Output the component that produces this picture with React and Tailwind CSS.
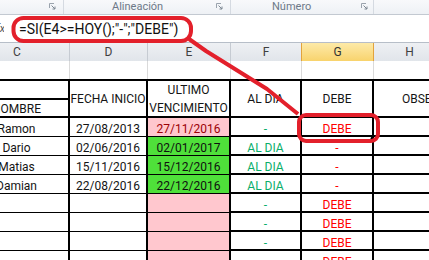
const COLS = "grid grid-cols-[105px_78px_83px_71px_72px_72px] -ml-[35px] w-[481px]";

const rows = [
  { name: "Ramon", start: "27/08/2013", last: "27/11/2016", ok: false },
  { name: "Dario", start: "02/06/2016", last: "02/01/2017", ok: true },
  { name: "Matias", start: "15/11/2016", last: "15/12/2016", ok: true },
  { name: "Damian", start: "22/08/2016", last: "22/12/2016", ok: true },
  { name: "", start: "", last: "", ok: false },
  { name: "", start: "", last: "", ok: false },
  { name: "", start: "", last: "", ok: false },
  { name: "", start: "", last: "", ok: false },
];

const Launcher = () => (
  <svg width="7" height="7" viewBox="0 0 7 7" className="shrink-0">
    <path d="M0.5 5V0.5H5" stroke="#9aa3ad" fill="none" />
    <path d="M2.5 2.5L6 6M6 3.5V6H3.5" stroke="#7d8792" fill="none" />
  </svg>
);

const App = () => {
  return (
    <div className="relative w-[429px] h-[260px] overflow-hidden bg-white font-['Roboto',sans-serif]">
      {/* ribbon group labels */}
      <div className="flex h-[15px] border-b border-[#c3c9d1] bg-gradient-to-b from-[#f8f9fb] to-[#eef1f5] text-[11px] leading-[12px] text-[#6d7988]">
        <div className="w-[64px] shrink-0 border-r border-[#d5dae1] flex items-start justify-end pr-[7px] pt-[3px]">
          <Launcher />
        </div>
        <div className="w-[167px] shrink-0 border-r border-[#d5dae1] flex items-start pl-[48px]">
          <span className="pt-[1px]">Alineación</span>
          <span className="ml-auto mr-[7px] pt-[3px]"><Launcher /></span>
        </div>
        <div className="w-[143px] shrink-0 border-r border-[#d5dae1] flex items-start pl-[41px]">
          <span className="pt-[1px]">Número</span>
          <span className="ml-auto mr-[5px] pt-[3px]"><Launcher /></span>
        </div>
        <div className="flex-1" />
      </div>

      {/* formula bar */}
      <div className="flex items-center h-[28px] bg-white">
        <div className="w-[4px] shrink-0 flex justify-end overflow-hidden">
          <span className="italic text-[11px] text-[#555] -mr-[1px]">fx</span>
        </div>
        <div className="pl-[15px] text-[14px] text-[#111] whitespace-nowrap">=SI(E4&gt;=HOY();"-";"DEBE")</div>
      </div>

      {/* column headers */}
      <div className={`${COLS} h-[17px] border-y border-[#b7bec8] text-[12px] text-[#3f3f3f] box-content -mt-px`}>
        {["C", "D", "E", "F", "G", "H"].map((l) => (
          <div
            key={l}
            className={
              l === "G"
                ? "flex items-center justify-center border-x border-[#e2a33d] -ml-px bg-gradient-to-b from-[#fdeaa8] to-[#f8d36c] text-[#333]"
                : "flex items-center justify-center border-r border-[#c6cbd2] bg-gradient-to-b from-[#eef0f3] to-[#e1e5ea]"
            }
          >
            {l}
          </div>
        ))}
      </div>

      {/* empty row 3 */}
      <div className={`${COLS} h-[18px]`}>
        {[0, 1, 2, 3, 4, 5].map((i) => (
          <div key={i} className="border-r border-[#dadada]" />
        ))}
      </div>

      {/* table */}
      <div className="border-t-2 border-black text-[12px] leading-[14px] text-[#141414]">
        <div className={`${COLS} grid-rows-[19px_18px]`}>
          <div className="border-r-2 border-b-2 border-black" />
          <div className="row-span-2 border-r-2 border-b-2 border-black flex items-center justify-center">FECHA INICIO</div>
          <div className="row-span-2 border-r-2 border-b-2 border-black flex flex-col items-center justify-center leading-[18px] pt-[1px]">
            <span>ULTIMO</span>
            <span>VENCIMIENTO</span>
          </div>
          <div className="row-span-2 border-r-2 border-b-2 border-black flex items-center justify-center">AL DIA</div>
          <div className="row-span-2 border-r-2 border-b-2 border-black flex items-center justify-center">DEBE</div>
          <div className="row-span-2 border-r-2 border-b-2 border-black flex items-center pl-[28px] whitespace-nowrap overflow-hidden">OBSERVACIONES</div>
          <div className="col-start-1 row-start-2 border-r-2 border-b-2 border-black flex items-end justify-center">NOMBRE</div>
        </div>

        {rows.map((r, i) => (
          <div key={i} className={`${COLS} h-[19px]`}>
            <div className="border-r-2 border-b border-black flex items-end justify-center">{r.name}</div>
            <div className="border-r-2 border-b border-black flex items-end justify-center">{r.start}</div>
            <div
              className={`border-r-2 border-b border-black flex items-end justify-center ${
                r.ok ? "bg-[#4fe03a] text-[#101010]" : "bg-[#ffc7ce] text-[#9c0006]"
              }`}
            >
              {r.last}
            </div>
            <div className="border-r-2 border-b-2 border-black flex items-end justify-center text-[#0aae6a]">
              <span className="-mb-px">{r.ok ? "AL DIA" : "-"}</span>
            </div>
            <div className="border-r-2 border-b-2 border-black flex items-end justify-center text-[#ff0000]">
              <span className="-mb-px">{r.ok ? "-" : "DEBE"}</span>
            </div>
            <div className="border-r-2 border-b-2 border-black" />
          </div>
        ))}
      </div>

      {/* red annotations */}
      <svg className="absolute inset-0 pointer-events-none" width="429" height="260" viewBox="0 0 429 260">
        <rect x="13.5" y="18" width="177.5" height="23" rx="10" fill="none" stroke="#e3202b" strokeWidth="4" />
        <path d="M189 39 L206 51 L267 89 L298 114" fill="none" stroke="#e3202b" strokeWidth="4" strokeLinejoin="round" />
        <rect x="299" y="115" width="79" height="26" rx="7" fill="none" stroke="#e3202b" strokeWidth="4" />
        <path d="M371 139 Q372 136 375 136" fill="none" stroke="#000" strokeWidth="1.5" />
      </svg>
    </div>
  );
};

export default App;
